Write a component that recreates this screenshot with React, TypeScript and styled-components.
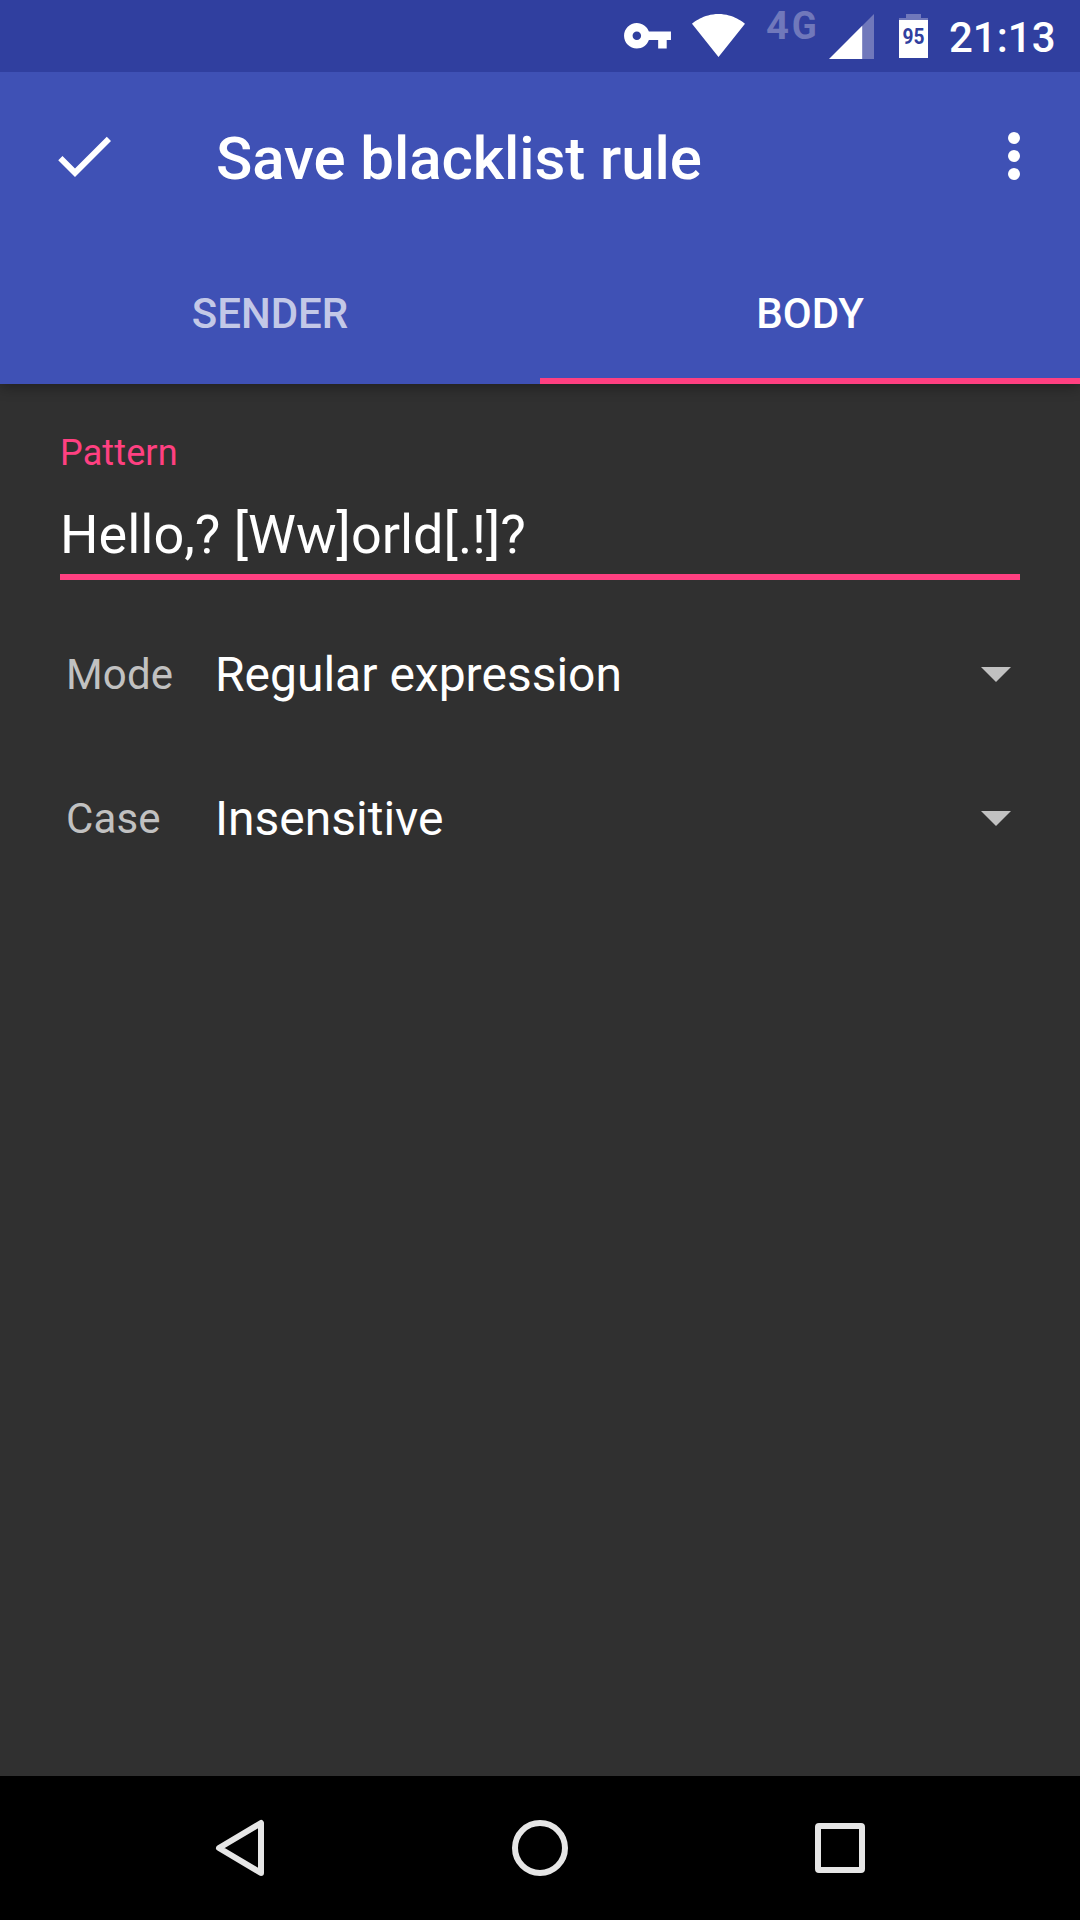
import React from "react";
import styled, { createGlobalStyle } from "styled-components";

const GlobalStyle = createGlobalStyle`
  * { box-sizing: border-box; }
  body { margin: 0; background: #303030; }
`;

const Screen = styled.div`
  display: flex;
  flex-direction: column;
  width: 1080px;
  height: 1920px;
  overflow: hidden;
  background: #303030;
  color: #fff;
  font-family: Roboto, "Noto Sans", sans-serif;
`;

const StatusBar = styled.div`
  display: flex;
  flex: none;
  justify-content: flex-end;
  align-items: flex-start;
  z-index: 1;
  height: 72px;
  padding-right: 25px;
  background: #303f9f;
`;

const StatusIcon = styled.svg<{ $top: number; $gap: number }>`
  display: block;
  flex: none;
  margin-top: ${(p) => p.$top}px;
  margin-right: ${(p) => p.$gap}px;
  overflow: visible;
`;

const Clock = styled.time`
  width: 106px;
  padding-top: 2px;
  font-size: 42px;
  font-weight: 500;
  line-height: 72px;
  text-align: right;
  white-space: nowrap;
`;

const AppBar = styled.header`
  flex: none;
  background: #3f51b5;
  box-shadow: 0 4px 12px rgba(0, 0, 0, 0.3);
`;

const Toolbar = styled.div`
  display: flex;
  align-items: center;
  height: 168px;
  padding: 0 30px 0 48px;
`;

const IconButton = styled.button`
  display: block;
  width: 72px;
  height: 72px;
  padding: 0;
  border: 0;
  background: none;
  color: inherit;

  svg {
    display: block;
  }
`;

const Title = styled.h1`
  flex: 1;
  margin: 0;
  padding: 5px 0 0 96px;
  font-size: 60px;
  font-weight: 500;
  line-height: 72px;
  letter-spacing: -0.06px;
  white-space: nowrap;
`;

const Tabs = styled.nav`
  display: flex;
  height: 144px;
`;

const Tab = styled.button<{ $active?: boolean }>`
  flex: 1;
  padding: 9px 0 0;
  border: 0;
  border-bottom: 6px solid ${(p) => (p.$active ? "#ff4081" : "transparent")};
  background: none;
  color: ${(p) => (p.$active ? "#fff" : "rgba(255, 255, 255, 0.7)")};
  font: 500 42px/48px Roboto, "Noto Sans", sans-serif;
`;

const Form = styled.main`
  flex: 1;
  padding: 48px 60px 0;
`;

const FieldLabel = styled.label`
  display: block;
  color: #ff4081;
  font-size: 36px;
  line-height: 43px;
  letter-spacing: 0.12px;
`;

const PatternField = styled.div`
  height: 105px;
  padding-top: 28px;
  border-bottom: 6px solid #ff4081;
  font-size: 54px;
  line-height: 64px;
  white-space: nowrap;
`;

const Options = styled.div`
  padding-top: 23px;
`;

const OptionRow = styled.div`
  display: flex;
  align-items: center;
  height: 144px;
  padding: 0 9px 0 6px;
`;

const OptionName = styled.span`
  width: 149px;
  color: #c1c1c1;
  font-size: 42px;
  line-height: 50px;
  letter-spacing: 0.15px;
`;

const OptionValue = styled.span`
  flex: 1;
  font-size: 48px;
  line-height: 56px;
`;

const Caret = styled.svg`
  display: block;
  flex: none;
  margin-bottom: 2px;
`;

const NavBar = styled.footer`
  display: flex;
  flex: none;
  justify-content: center;
  align-items: center;
  gap: 240px;
  height: 144px;
  background: #000;
`;

const NavIcon = styled.svg`
  display: block;
  width: 60px;
  height: 60px;
  fill: none;
  stroke: #e6e6e6;
  stroke-width: 6;
  stroke-linejoin: round;
`;

const options = [
  { name: "Mode", value: "Regular expression" },
  { name: "Case", value: "Insensitive" },
];

export default function App() {
  return (
    <Screen>
      <GlobalStyle />
      <StatusBar>
        <StatusIcon $top={23} $gap={21} width="47" height="25.6" viewBox="1 6 22 12">
          <path
            fill="#fff"
            d="M12.65 10C11.83 7.67 9.61 6 7 6c-3.31 0-6 2.69-6 6s2.69 6 6 6c2.61 0 4.83-1.67 5.65-4H17v4h4v-4h2v-4H12.65zM7 14c-1.1 0-2-.9-2-2s.9-2 2-2 2 .9 2 2-.9 2-2 2z"
          />
        </StatusIcon>
        <StatusIcon $top={14} $gap={22} width="53" height="43" viewBox="0 0 53 43">
          <path fill="#fff" d="M26.5 43L0 9.7C1.2 8.8 11.2 0 26.5 0S51.8 8.8 53 9.7z" />
        </StatusIcon>
        <StatusIcon $top={12} $gap={12} width="50" height="27" viewBox="0 0 50 27">
          <g fill="#7078bb" fontFamily="Roboto, sans-serif" fontWeight="700" fontSize="38">
            <text x="-1" y="27" textLength="23" lengthAdjust="spacingAndGlyphs">4</text>
            <text x="24.8" y="27" textLength="25" lengthAdjust="spacingAndGlyphs">G</text>
          </g>
        </StatusIcon>
        <StatusIcon $top={14} $gap={25} width="45" height="45" viewBox="0 0 45 45">
          <path fill="#7078bb" d="M45 0v45H33V12z" />
          <path fill="#fff" d="M0 45L33.2 11.8V45z" />
        </StatusIcon>
        <StatusIcon $top={14} $gap={21} width="29" height="44" viewBox="0 0 29 44">
          <path fill="#7078bb" d="M7 0h15v4h7v2.5H0V4h7z" />
          <path fill="#fff" d="M0 6h29v38H0z" />
          <text
            x="3.5"
            y="30.3"
            fill="#303f9f"
            fontFamily="Roboto, sans-serif"
            fontWeight="700"
            fontSize="22"
            textLength="22"
            lengthAdjust="spacingAndGlyphs"
          >
            95
          </text>
        </StatusIcon>
        <Clock>21:13</Clock>
      </StatusBar>

      <AppBar>
        <Toolbar>
          <IconButton aria-label="Save">
            <svg width="72" height="72" viewBox="0 0 24 24" fill="#fff">
              <path d="M9 16.17L4.83 12l-1.42 1.41L9 19 21 7l-1.41-1.41z" />
            </svg>
          </IconButton>
          <Title>Save blacklist rule</Title>
          <IconButton aria-label="More options">
            <svg width="72" height="72" viewBox="0 0 24 24" fill="#fff">
              <circle cx="12" cy="6" r="2" />
              <circle cx="12" cy="12" r="2" />
              <circle cx="12" cy="18" r="2" />
            </svg>
          </IconButton>
        </Toolbar>
        <Tabs>
          <Tab>SENDER</Tab>
          <Tab $active>BODY</Tab>
        </Tabs>
      </AppBar>

      <Form>
        <FieldLabel>Pattern</FieldLabel>
        <PatternField>Hello,? [Ww]orld[.!]?</PatternField>
        <Options>
          {options.map((o) => (
            <OptionRow key={o.name}>
              <OptionName>{o.name}</OptionName>
              <OptionValue>{o.value}</OptionValue>
              <Caret width="30" height="15" viewBox="0 0 30 15">
                <path fill="#c1c1c1" d="M0 0h30L15 15z" />
              </Caret>
            </OptionRow>
          ))}
        </Options>
      </Form>

      <NavBar>
        <NavIcon viewBox="0 0 60 60">
          <path d="M51 5v50L9 30z" />
        </NavIcon>
        <NavIcon viewBox="0 0 60 60">
          <circle cx="30" cy="30" r="25" />
        </NavIcon>
        <NavIcon viewBox="0 0 60 60">
          <rect x="8" y="8" width="44" height="44" rx="1" />
        </NavIcon>
      </NavBar>
    </Screen>
  );
}
